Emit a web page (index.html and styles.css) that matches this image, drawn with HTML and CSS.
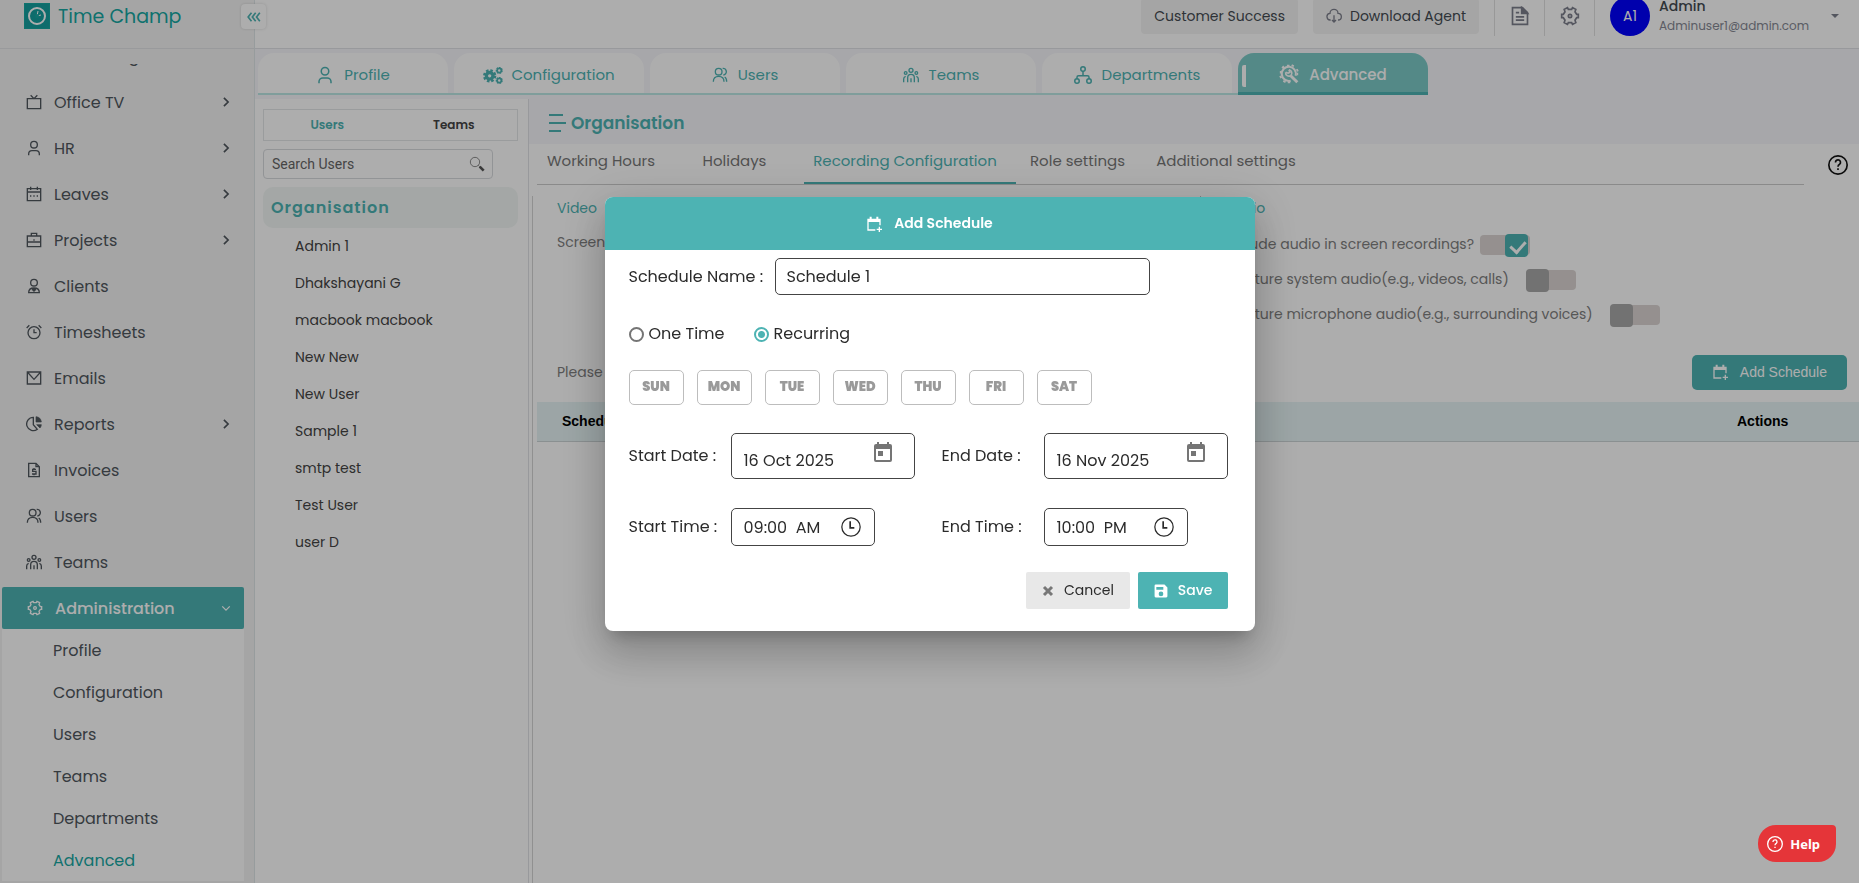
FILE: index.html
```html
<!DOCTYPE html>
<html lang="en">
<head>
  <meta charset="UTF-8" />
  <meta name="viewport" content="width=device-width, initial-scale=1.0" />
  <title>Time Champ</title>
  <link rel="stylesheet" href="styles.css">
</head>
<body>
  <svg class="sprite" aria-hidden="true">
    <symbol id="i-user" viewBox="0 0 24 24"><circle cx="12" cy="7" r="5"/><path d="M4 23v-2a5 5 0 0 1 5-5h6a5 5 0 0 1 5 5v2"/></symbol>
    <symbol id="i-tv" viewBox="0 0 24 24"><path d="M2 7h20v15H2zM7 2l5 5 5-5"/></symbol>
    <symbol id="i-cal" viewBox="0 0 24 24"><path d="M2 4h20v18H2zM2 9h20M7 1v5M17 1v5"/><path d="M6 15h2M11 15h2M16 15h2"/></symbol>
    <symbol id="i-case" viewBox="0 0 24 24"><path d="M2 6h20v16H2zM8 6V2h8v4M2 15h20M11 12h2"/></symbol>
    <symbol id="i-client" viewBox="0 0 24 24"><circle cx="12" cy="7" r="5"/><path d="M4 22c0-5 3-7 8-7s8 2 8 7zM12 15v7M9 17l3 2 3-2"/></symbol>
    <symbol id="i-alarm" viewBox="0 0 24 24"><circle cx="12" cy="13" r="9"/><path d="M12 8v5h4M1 6l4-4M23 6l-4-4"/></symbol>
    <symbol id="i-mail" viewBox="0 0 24 24"><path d="M2 3h20v18H2zM2 3l10 11L22 3"/></symbol>
    <symbol id="i-pie" viewBox="0 0 24 24"><path d="M11 2a10 10 0 1 0 6 18l-6-7z"/><path d="M15 1a9 9 0 0 1 8 8h-8zM16 13h7a9 9 0 0 1-2 5z" fill="currentColor" stroke-width="1"/></symbol>
    <symbol id="i-invoice" viewBox="0 0 24 24"><path d="M4 2h11l5 5v15H4zM15 2v5h5"/><path d="M15 11h-5v3h5v4h-6M12 9v2M12 18v2"/></symbol>
    <symbol id="i-users" viewBox="0 0 24 24"><circle cx="10" cy="7" r="5"/><path d="M2 22c0-5 3-8 8-8s8 3 8 8M16 2a5 5 0 0 1 1 10M19 15c2 1 3 4 3 7"/></symbol>
    <symbol id="i-team" viewBox="0 0 24 24"><circle cx="12" cy="5" r="3"/><path d="M7 23v-7a5 5 0 0 1 10 0v7M12 17v6M1 23v-5q0-3 3-4M23 23v-5q0-3-3-4"/><circle cx="4" cy="9" r="2"/><circle cx="20" cy="9" r="2"/></symbol>
    <symbol id="i-gear" viewBox="0 0 24 24"><path d="M9 2l1 2h4l1-2 4 2-1 3 2 3h2v4h-2l-2 3 1 3-4 2-1-2h-4l-1 2-4-2 1-3-2-3H2v-4h2l2-3-1-3z"/><circle cx="12" cy="12" r="2"/></symbol>
    <symbol id="i-gears" viewBox="0 0 24 24"><circle cx="8" cy="13" r="4" stroke-width="4"/><circle cx="8" cy="13" r="6.500" stroke-width="3" stroke-dasharray="3 2.100"/><circle cx="19.500" cy="6.500" r="2.500"/><circle cx="19.500" cy="6.500" r="3.500" stroke-width="1.500" stroke-dasharray="2 1.140"/><circle cx="19.500" cy="18.500" r="2.500"/><circle cx="19.500" cy="18.500" r="3.500" stroke-width="1.500" stroke-dasharray="2 1.140"/></symbol>
    <symbol id="i-tree" viewBox="0 0 24 24"><circle cx="12" cy="4" r="3"/><circle cx="4" cy="20" r="3"/><circle cx="20" cy="20" r="3"/><path d="M12 7v6M4 17v-2q0-2 2-2h12q2 0 2 2v2"/></symbol>
    <symbol id="i-tool" viewBox="0 0 24 24"><path d="M20 14a8.500 8.500 0 1 0-6 6" stroke-width="2.500"/><path d="M21 8l2-1M16 3l1-2M11 3V1M6 5L4 3M3 10H1M3 15l-2 1M7 20l-1 2M12 21v2M21 12h2" stroke-width="3"/><path d="M8 10a4 4 0 0 0 6 4 4 4 0 0 0-2-7"/><path d="M8 10l3 1 2-1-1-3"/><path d="M14 14l8 8" stroke-width="3.500"/></symbol>
    <symbol id="i-addcal" viewBox="0 0 24 24"><path d="M14 21H3V5h18v9"/><path d="M3 7h18" stroke-width="4"/><path d="M7 1v4M17 1v4" stroke-width="3"/><path d="M20 16v8M16 20h8"/></symbol>
    <symbol id="i-right" viewBox="0 0 24 24"><path d="M7 2l10 10L7 22"/></symbol>
    <symbol id="i-down" viewBox="0 0 24 24"><path d="M3 8l9 9 9-9" stroke-width="3"/></symbol>
    <symbol id="i-today" viewBox="0 0 24 24"><path d="M19 3h-1V1h-2v2H8V1H6v2H5a2 2 0 0 0-2 2v14a2 2 0 0 0 2 2h14a2 2 0 0 0 2-2V5a2 2 0 0 0-2-2zm0 16H5V8h14zM7 10h5v5H7z" fill="currentColor" stroke="none"/></symbol>
    <symbol id="i-clock" viewBox="0 0 24 24"><circle cx="12" cy="12" r="11" stroke-width="1.500"/><path d="M11 5v8h5"/></symbol>
    <symbol id="i-help" viewBox="0 0 24 24"><circle cx="12" cy="12" r="11"/><path d="M9 9a3 3 0 1 1 5 2q-2 1-2 3M12 16v2"/></symbol>
  </svg>

  <div class="app">
    <aside class="sidebar">
      <div class="brand">
        <svg class="logo" viewBox="0 0 26 26"><rect width="26" height="26" rx="2" fill="#15a0a0"/><circle cx="13" cy="13" r="8" fill="none" stroke="#fff" stroke-width="2"/><path d="M14 8l-1 5 4-1" fill="none" stroke="#fff" stroke-width="1"/><circle cx="13" cy="13" r="1" fill="#e33"/></svg>
        <span>Time Champ</span>
        <button class="collapse" aria-label="Collapse menu"><svg viewBox="0 0 16 12"><path d="M5 1L1 6l4 5M10 1L6 6l4 5M15 1l-4 5 4 5"/></svg></button>
      </div>
      <nav class="nav">
        <ul>
          <li><a href="#"><svg><use href="#i-tv"/></svg><span>Monitoring</span></a></li>
          <li><a href="#"><svg><use href="#i-tv"/></svg><span>Office TV</span><svg class="arrow"><use href="#i-right"/></svg></a></li>
          <li><a href="#"><svg><use href="#i-user"/></svg><span>HR</span><svg class="arrow"><use href="#i-right"/></svg></a></li>
          <li><a href="#"><svg><use href="#i-cal"/></svg><span>Leaves</span><svg class="arrow"><use href="#i-right"/></svg></a></li>
          <li><a href="#"><svg><use href="#i-case"/></svg><span>Projects</span><svg class="arrow"><use href="#i-right"/></svg></a></li>
          <li><a href="#"><svg><use href="#i-client"/></svg><span>Clients</span></a></li>
          <li><a href="#"><svg><use href="#i-alarm"/></svg><span>Timesheets</span></a></li>
          <li><a href="#"><svg><use href="#i-mail"/></svg><span>Emails</span></a></li>
          <li><a href="#"><svg><use href="#i-pie"/></svg><span>Reports</span><svg class="arrow"><use href="#i-right"/></svg></a></li>
          <li><a href="#"><svg><use href="#i-invoice"/></svg><span>Invoices</span></a></li>
          <li><a href="#"><svg><use href="#i-users"/></svg><span>Users</span></a></li>
          <li><a href="#"><svg><use href="#i-team"/></svg><span>Teams</span></a></li>
          <li class="open"><a href="#"><svg><use href="#i-gear"/></svg><span>Administration</span><svg class="arrow"><use href="#i-down"/></svg></a></li>
        </ul>
        <div class="submenu">
          <a href="#">Profile</a>
          <a href="#">Configuration</a>
          <a href="#">Users</a>
          <a href="#">Teams</a>
          <a href="#">Departments</a>
          <a href="#" class="current">Advanced</a>
        </div>
      </nav>
    </aside>

    <div class="main">
      <header class="topbar">
        <button class="top-btn">Customer Success</button>
        <button class="top-btn"><svg viewBox="0 0 24 24"><path d="M7 18a5 5 0 0 1-1-10 6 6 0 0 1 12 0 5 5 0 0 1 0 10M12 11v10M9 18l3 3 3-3"/></svg>Download Agent</button>
        <div class="top-icons">
          <button aria-label="Documents"><svg class="doc" viewBox="0 0 24 24"><path d="M3 2h12l6 6v14H3zM7 8h4M7 13h10M7 17h10"/><path d="M14 2v7h7z" fill="currentColor"/></svg></button>
          <button aria-label="Settings"><svg><use href="#i-gear"/></svg></button>
        </div>
        <div class="account">
          <span class="avatar">A1</span>
          <div class="who"><b>Admin</b><small>Adminuser1@admin.com</small></div>
          <span class="caret"></span>
        </div>
      </header>

      <nav class="tabbar">
        <div class="tabs">
          <button><svg class="mid"><use href="#i-user"/></svg>Profile</button>
          <button class="tight"><svg class="big"><use href="#i-gears"/></svg>Configuration</button>
          <button><svg><use href="#i-users"/></svg>Users</button>
          <button><svg><use href="#i-team"/></svg>Teams</button>
          <button><svg class="mid"><use href="#i-tree"/></svg>Departments</button>
          <button class="active"><svg class="big"><use href="#i-tool"/></svg>Advanced</button>
        </div>
      </nav>

      <div class="workspace">
        <section class="people">
          <div class="switch">
            <button class="on">Users</button>
            <button>Teams</button>
          </div>
          <div class="search">
            <input type="text" placeholder="Search Users" aria-label="Search Users">
            <svg viewBox="0 0 24 24"><circle cx="9" cy="9" r="7"/><path d="M14 14l2 2"/><path d="M16 16l6 6" stroke-width="4"/></svg>
          </div>
          <div class="org">Organisation</div>
          <ul class="user-list">
            <li>Admin 1</li>
            <li>Dhakshayani G</li>
            <li>macbook macbook</li>
            <li>New New</li>
            <li>New User</li>
            <li>Sample 1</li>
            <li>smtp test</li>
            <li>Test User</li>
            <li>user D</li>
          </ul>
        </section>

        <section class="settings">
          <div class="title">
            <svg viewBox="0 0 17 18"><path d="M0 1h14M0 9h17M0 17h12"/></svg>
            <h1>Organisation</h1>
          </div>
          <div class="subtabs-row">
            <div class="subtabs">
              <button>Working Hours</button>
              <button>Holidays</button>
              <button class="active">Recording Configuration</button>
              <button>Role settings</button>
              <button>Additional settings</button>
            </div>
            <button class="info" aria-label="Help"><svg><use href="#i-help"/></svg></button>
          </div>
          <div class="panel">
            <div class="recording">
              <div class="video">
                <h2>Video</h2>
                <p>Screen recording</p>
              </div>
              <div class="audio">
                <h2>Audio</h2>
                <div class="option near"><label for="inc">Include audio in screen recordings?</label><input type="checkbox" id="inc" checked></div>
                <div class="option"><label for="sys">Capture system audio(e.g., videos, calls)</label><input type="checkbox" id="sys"></div>
                <div class="option"><label for="mic">Capture microphone audio(e.g., surrounding voices)</label><input type="checkbox" id="mic"></div>
              </div>
            </div>
            <div class="add-row">
              <p>Please add a schedule</p>
              <button class="add"><svg><use href="#i-addcal"/></svg>Add Schedule</button>
            </div>
            <table>
              <thead><tr><th>Schedule Name</th><th class="actions">Actions</th></tr></thead>
            </table>
          </div>
        </section>
      </div>
    </div>
  </div>

  <div class="overlay">
    <form class="modal" role="dialog" aria-label="Add Schedule">
      <div class="modal-head"><svg><use href="#i-addcal"/></svg>Add Schedule</div>
      <div class="modal-body">
        <div class="name-row">
          <label for="name">Schedule Name :</label>
          <input type="text" id="name" value="Schedule 1">
        </div>
        <div class="radios">
          <label><input type="radio" name="type">One Time</label>
          <label><input type="radio" name="type" checked>Recurring</label>
        </div>
        <div class="days">
          <button type="button">SUN</button>
          <button type="button">MON</button>
          <button type="button">TUE</button>
          <button type="button">WED</button>
          <button type="button">THU</button>
          <button type="button">FRI</button>
          <button type="button">SAT</button>
        </div>
        <div class="when">
          <label for="sd">Start Date :</label>
          <div class="field date"><input type="text" id="sd" value="16 Oct 2025"><svg><use href="#i-today"/></svg></div>
          <label for="ed">End Date :</label>
          <div class="field date"><input type="text" id="ed" value="16 Nov 2025"><svg><use href="#i-today"/></svg></div>
          <label for="st">Start Time :</label>
          <div class="field time"><input type="text" id="st" value="09:00  AM"><svg><use href="#i-clock"/></svg></div>
          <label for="et">End Time :</label>
          <div class="field time"><input type="text" id="et" value="10:00  PM"><svg><use href="#i-clock"/></svg></div>
        </div>
        <div class="modal-foot">
          <button type="button" class="cancel"><svg viewBox="0 0 12 12"><path d="M2 2l8 8M10 2l-8 8" stroke-width="3"/></svg>Cancel</button>
          <button type="submit" class="save"><svg viewBox="0 0 24 24"><path d="M3 1h15l5 5v15a2 2 0 0 1-2 2H3a2 2 0 0 1-2-2V3a2 2 0 0 1 2-2zm1 4v5h12V5zm8 8a4 4 0 1 0 0 8 4 4 0 0 0 0-8z" fill="currentColor" fill-rule="evenodd" stroke="none"/></svg>Save</button>
        </div>
      </div>
    </form>
  </div>

  <button class="help-fab"><svg><use href="#i-help"/></svg>Help</button>
</body>
</html>
```
FILE: styles.css
```css
* {
  box-sizing: border-box;
}
body {
  margin: 0;
  font-family: Poppins, Inter, sans-serif;
  font-size: 16px;
  color: #555;
  background: #fff;
}
button, input {
  font-family: inherit;
  font-size: inherit;
  color: inherit;
}
button {
  border: none;
  background: none;
  padding: 0;
  cursor: pointer;
}
a {
  color: inherit;
  text-decoration: none;
}
ul {
  list-style: none;
  margin: 0;
  padding: 0;
}
h1, h2, p {
  margin: 0;
}
svg {
  width: 16px;
  height: 16px;
  flex: none;
  fill: none;
  stroke: currentColor;
  stroke-width: 2;
}
.sprite {
  position: absolute;
  width: 0;
  height: 0;
}
.app {
  display: flex;
  height: 100vh;
  overflow: hidden;
}

/* sidebar */
.sidebar {
  width: 255px;
  flex: none;
  background: #f4f4f4;
  border-right: 1px solid #dfe6e8;
}
.brand {
  position: relative;
  z-index: 1;
  display: flex;
  align-items: center;
  height: 49px;
  padding: 0 0 16px 24px;
  gap: 8px;
  border-bottom: 1px solid #e2e4e6;
  color: #17a8a3;
  font-size: 19px;
}
.brand .logo {
  width: 26px;
  height: 26px;
}
.collapse {
  position: absolute;
  top: 4px;
  right: -12px;
  width: 25px;
  height: 25px;
  background: #fff;
  border-radius: 4px;
  box-shadow: 0 0 3px rgba(0, 0, 0, 0.15);
  display: flex;
  align-items: center;
  justify-content: center;
  color: #4db3b3;
}
.collapse svg {
  width: 16px;
  height: 10px;
}
.nav {
  margin-top: 15px;
  height: calc(100vh - 64px);
  overflow: hidden;
  color: #50575e;
}
.nav ul {
  margin: -31px 10px 0 2px;
}
.nav li a {
  display: flex;
  align-items: center;
  gap: 12px;
  height: 46px;
  padding: 0 13px 0 24px;
}
.nav li .arrow {
  width: 10px;
  height: 10px;
  margin-left: auto;
  stroke-width: 4;
}
.nav li.open {
  padding-top: 2px;
}
.nav li.open a {
  height: 42px;
  padding-left: 25px;
  background: #4db3b3;
  border-radius: 2px;
  color: #fff;
  font-weight: 500;
}
.submenu {
  margin: 0 10px 0 2px;
  background: #fff;
}
.submenu a {
  display: flex;
  align-items: center;
  height: 42px;
  padding-left: 51px;
}
.submenu .current {
  color: #17a8a3;
}

/* top bar */
.main {
  flex: 1;
  min-width: 0;
  display: flex;
  flex-direction: column;
}
.topbar {
  display: flex;
  align-items: flex-end;
  justify-content: flex-end;
  height: 49px;
  padding: 0 20px 12px 0;
  border-bottom: 1px solid #e0e2e6;
  overflow: hidden;
}
.top-btn {
  display: flex;
  align-items: center;
  gap: 8px;
  height: 36px;
  margin: 0 15px 2px 0;
  padding: 0 13px;
  border-radius: 4px;
  background: #f4f4f4;
  color: #444b52;
  font-size: 14px;
}
.top-btn svg {
  color: #7d7f8c;
}
.top-icons {
  display: flex;
  height: 40px;
  color: #7d7f8c;
  border-left: 1px solid #e0e0e0;
}
.top-icons button {
  width: 50px;
  padding-top: 6px;
  border-right: 1px solid #e0e0e0;
}
.top-icons svg {
  width: 20px;
  height: 20px;
}
.account {
  display: flex;
  align-items: center;
  padding-left: 15px;
}
.avatar {
  width: 40px;
  height: 40px;
  border-radius: 50%;
  background: #00f;
  color: #fff;
  font-size: 14px;
  line-height: 40px;
  text-align: center;
}
.who {
  width: 172px;
  margin-left: 9px;
}
.who b {
  display: block;
  font-size: 14px;
  line-height: 20px;
  font-weight: 500;
  color: #444b52;
}
.who small {
  display: block;
  font-size: 12px;
  line-height: 20px;
  color: #868994;
}
.caret {
  border: 4px solid transparent;
  border-top-color: #7d7f8c;
  border-bottom: 0;
}

/* main tabs */
.tabbar {
  height: 50px;
  flex: none;
  padding: 4px 0 0 3px;
  background: #f6f6fb;
}
.tabs {
  display: inline-flex;
  gap: 6px;
  height: 42px;
  border-bottom: 2px solid #bbe8e5;
}
.tabs button {
  display: flex;
  align-items: center;
  justify-content: center;
  gap: 10px;
  width: 190px;
  padding-top: 3px;
  background: #fff;
  border-radius: 16px 16px 0 0;
  color: #4db3b3;
  font-size: 15px;
}
.tabs button svg {
  width: 16px;
  height: 16px;
}
.tabs button .mid {
  width: 18px;
  height: 18px;
}
.tabs button .big {
  width: 20px;
  height: 20px;
}
.tabs .tight {
  gap: 8px;
}
.tabs .active {
  position: relative;
  height: 42px;
  background: #7dcbc8;
  border-bottom: 3px solid #4db3b3;
  color: #fff;
  font-weight: 500;
}
.tabs .active::before {
  content: "";
  position: absolute;
  left: 4px;
  top: 12px;
  width: 4px;
  height: 22px;
  border-radius: 2px 0 0 2px;
  background: #fff;
}

/* people list */
.workspace {
  flex: 1;
  display: flex;
}
.people {
  width: 274px;
  flex: none;
  padding: 10px 10px 0 8px;
  border-right: 1px solid #e0e2e6;
}
.switch {
  display: flex;
  height: 32px;
  border: 1px solid #e4e6e8;
}
.switch button {
  flex: 1;
  font-size: 12px;
  font-weight: 600;
  color: #444;
}
.switch .on {
  color: #4db3b3;
}
.search {
  display: flex;
  align-items: center;
  width: 230px;
  height: 30px;
  margin-top: 8px;
  padding: 0 7px 0 8px;
  border: 1px solid #d8dade;
  border-radius: 4px;
}
.search input {
  flex: 1;
  min-width: 0;
  border: none;
  outline: none;
  padding: 0;
  background: none;
  font: 14px Roboto, sans-serif;
}
.search input::placeholder {
  color: #666;
}
.search svg {
  stroke-width: 1;
}
.org {
  height: 41px;
  margin-top: 8px;
  padding-left: 8px;
  border-radius: 10px;
  background: #f2f7f5;
  color: #4db3b3;
  font-weight: 600;
  line-height: 41px;
  letter-spacing: 1px;
}
.user-list {
  font-size: 14px;
  color: #444;
}
.user-list li {
  height: 37px;
  padding-left: 32px;
  line-height: 37px;
}

/* settings */
.settings {
  flex: 1;
  min-width: 0;
}
.title {
  display: flex;
  align-items: center;
  gap: 5px;
  height: 45px;
  padding: 3px 0 0 20px;
  background: #f6f6fb;
  color: #4db3b3;
}
.title svg {
  width: 17px;
  height: 18px;
}
.title h1 {
  font-size: 17px;
  font-weight: 600;
}
.subtabs-row {
  display: flex;
  align-items: center;
  padding-left: 8px;
}
.subtabs {
  flex: 1;
  display: grid;
  grid-template-columns: 128px 139px 212px 123px 174px;
  height: 41px;
  border-bottom: 1px solid #ccc;
  font-size: 15px;
}
.subtabs button {
  padding-bottom: 7px;
  color: #777;
}
.subtabs .active {
  border-bottom: 2px solid #4db3b3;
  padding: 0 10px 5px 0;
  color: #4db3b3;
}
.info {
  width: 55px;
  padding: 8px 0 0 12px;
  color: #111;
}
.info svg {
  width: 20px;
  height: 20px;
}
.panel {
  margin: 11px 0 0 3px;
  padding-left: 4px;
  border-left: 1px solid #d4d4d4;
  height: calc(100vh - 196px);
  font-size: 14px;
  color: #808080;
}
.panel h2 {
  font-size: 14px;
  font-weight: 400;
  line-height: 24px;
  color: #4db3b3;
}
.recording {
  display: flex;
  height: 149px;
}
.video {
  width: 664px;
  padding-left: 20px;
  border-right: 1px solid #bbb;
}
.video p {
  margin-top: 12px;
  line-height: 20px;
}
.audio {
  padding-left: 24px;
}
.audio h2 {
  margin-bottom: 7px;
}
.option {
  display: flex;
  align-items: center;
  gap: 17px;
  height: 35px;
}
.option.near {
  gap: 6px;
}
.option input {
  appearance: none;
  position: relative;
  width: 50px;
  height: 20px;
  margin: 0;
  border-radius: 4px;
  background: #dcd5d3;
}
.option input::before {
  content: "";
  position: absolute;
  left: 0;
  top: -1px;
  width: 23px;
  height: 23px;
  border-radius: 4px;
  background: #a8a8a8;
}
.option input:checked::before {
  left: 25px;
  background: #4db3b3;
}
.option input:checked::after {
  content: "";
  position: absolute;
  left: 33px;
  top: 3px;
  width: 7px;
  height: 12px;
  border: solid #fff;
  border-width: 0 3px 3px 0;
  transform: rotate(42deg);
}
.add-row {
  display: flex;
  align-items: center;
  justify-content: space-between;
  height: 57px;
  padding: 0 12px 3px 20px;
}
.add {
  display: flex;
  align-items: center;
  gap: 12px;
  height: 35px;
  padding: 0 20px;
  border-radius: 5px;
  background: #4db3b3;
  color: #fff;
  font: 14px "Liberation Sans", Arial, sans-serif;
}
table {
  width: 100%;
  border-collapse: collapse;
}
th {
  height: 39px;
  padding: 0 0 0 25px;
  background: #e6f4f5;
  border-bottom: 1px solid #ccd4d6;
  color: #000;
  font: bold 14px "Liberation Sans", Arial, sans-serif;
  text-align: left;
}
th.actions {
  width: 147px;
}

/* modal */
.overlay {
  position: fixed;
  inset: 0;
  z-index: 10;
  display: flex;
  justify-content: center;
  align-items: flex-start;
  padding-top: 197px;
  background: rgba(0, 0, 0, 0.32);
}
.modal {
  width: 650px;
  border-radius: 8px;
  background: #fff;
  color: #2b2b2b;
  overflow: hidden;
  box-shadow: 0 11px 15px -7px rgba(0, 0, 0, 0.2), 0 24px 38px 3px rgba(0, 0, 0, 0.14), 0 9px 46px 8px rgba(0, 0, 0, 0.12);
}
.modal-head {
  display: flex;
  align-items: center;
  justify-content: center;
  gap: 12px;
  height: 53px;
  background: #4db3b3;
  color: #fff;
  font-size: 14px;
  font-weight: 600;
}
.modal-body {
  padding: 8px 27px 22px 24px;
}
.name-row {
  display: flex;
  align-items: center;
}
.name-row label {
  width: 146px;
}
.name-row input {
  width: 375px;
  height: 37px;
  padding: 0 11px;
  border: 1px solid #444;
  border-radius: 5px;
}
.radios {
  display: flex;
  gap: 29px;
  margin: 27px 0 24px;
  line-height: 24px;
}
.radios label {
  display: flex;
  align-items: center;
  gap: 5px;
}
.radios input {
  appearance: none;
  width: 15px;
  height: 15px;
  margin: 0;
  border: 2px solid #757575;
  border-radius: 50%;
}
.radios input:checked {
  border-color: #4db3b3;
  background: radial-gradient(#4db3b3 3px, #fff 4px);
}
.days {
  display: flex;
  gap: 13px;
}
.days button {
  width: 55px;
  height: 35px;
  padding-bottom: 2px;
  border: 1px solid #bdbdbd;
  border-radius: 5px;
  color: #9a9a9a;
  font-size: 13px;
  font-weight: 900;
}
.when {
  display: grid;
  grid-template-columns: 102px 211px 102px 184px;
  row-gap: 29px;
  align-items: center;
  margin-top: 28px;
}
.when label {
  padding-bottom: 2px;
}
.field {
  display: flex;
  align-items: center;
  justify-content: space-between;
  border: 1px solid #444;
  border-radius: 5px;
  padding-left: 12px;
}
.field input {
  width: 100px;
  border: none;
  outline: none;
  padding: 0;
  background: none;
}
.field.date {
  width: 184px;
  height: 46px;
  padding-right: 19px;
}
.field.date input {
  padding-top: 8px;
}
.field.date svg {
  width: 24px;
  height: 24px;
  margin-bottom: 6px;
  color: #757575;
}
.field.time {
  width: 144px;
  height: 38px;
  padding-right: 13px;
}
.field.time input {
  width: 90px;
  white-space: pre;
}
.field.time svg {
  width: 20px;
  height: 20px;
}
.modal-foot {
  display: flex;
  justify-content: flex-end;
  gap: 8px;
  margin-top: 26px;
}
.modal-foot button {
  display: flex;
  align-items: center;
  gap: 10px;
  height: 37px;
  padding: 0 16px;
  border-radius: 2px;
  font-size: 14px;
}
.modal-foot svg {
  width: 12px;
  height: 12px;
}
.cancel {
  background: #e8e8e8;
}
.cancel svg {
  color: #777;
}
.modal-foot .save {
  padding: 0 15px 0 16px;
  background: #4db3b3;
  color: #fff;
  font-weight: 500;
}
.modal-foot .save svg {
  width: 14px;
  height: 14px;
}
.help-fab {
  position: fixed;
  right: 23px;
  bottom: 21px;
  z-index: 11;
  display: flex;
  align-items: center;
  gap: 7px;
  height: 37px;
  padding: 0 16px 0 9px;
  border-radius: 18px 4px 18px 18px;
  background: #e53539;
  color: #fff;
  font: bold 13px "Noto Sans", sans-serif;
}
```
